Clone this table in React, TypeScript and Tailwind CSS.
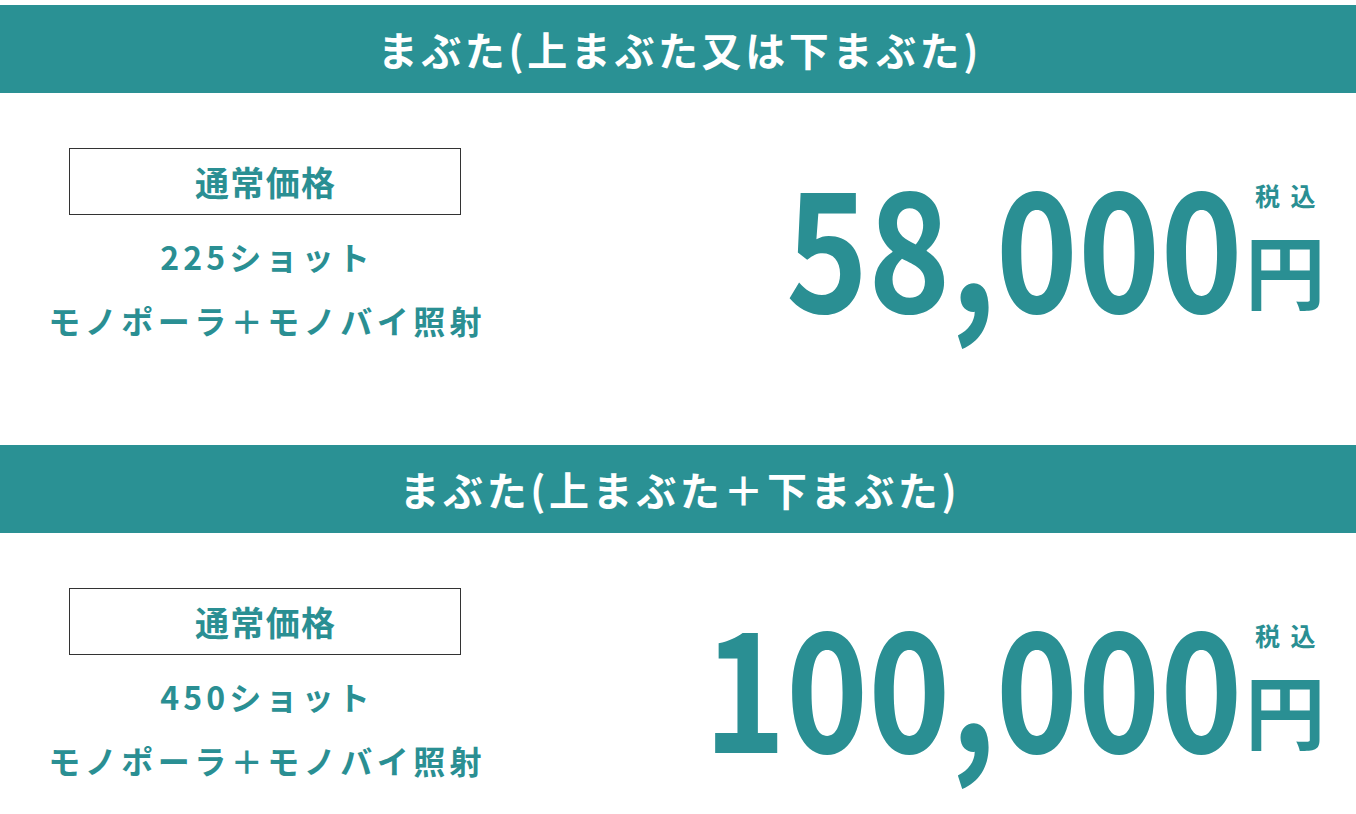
const JP = "font-['Noto_Sans_CJK_JP','Noto_Sans',sans-serif]";

type Plan = {
  title: string;
  shots: string;
  price: string;
};

const PLANS: Plan[] = [
  { title: "まぶた(上まぶた又は下まぶた)", shots: "225ショット", price: "58,000" },
  { title: "まぶた(上まぶた＋下まぶた)", shots: "450ショット", price: "100,000" },
];

function PlanSection({ plan }: { plan: Plan }) {
  return (
    <section>
      <div className="h-[88px] bg-[#2a9194] flex items-center justify-center">
        <h2 className={`${JP} text-white font-bold text-[40px] leading-none tracking-[0.09em] pl-[0.09em]`}>
          {plan.title}
        </h2>
      </div>
      <div className="flex items-start justify-between pr-[30px]">
        {/* left: label + course details */}
        <div className="w-[530px] flex flex-col items-center pt-[55px] text-[#2a8f93] font-bold">
          <div className="w-[392px] h-[67px] border border-[#333] flex items-center justify-center">
            <span className={`${JP} text-[34px] leading-none tracking-[0.04em] pl-[0.04em]`}>通常価格</span>
          </div>
          <p className={`${JP} mt-[25px] text-[32px] leading-none tracking-[0.13em] pl-[0.13em]`}>{plan.shots}</p>
          <p className={`${JP} mt-[32px] text-[32px] leading-none tracking-[0.14em] pl-[0.14em]`}>
            モノポーラ＋モノバイ照射
          </p>
        </div>
        {/* right: price */}
        <div className="flex items-end pt-[82px] text-[#2a8f93] font-bold">
          <span className={`${JP} text-[166px] leading-[0.8] inline-block scale-x-[0.84] origin-right`}>
            {plan.price}
          </span>
          <div className="flex flex-col items-center ml-[2px]">
            <span className={`${JP} text-[25px] leading-none tracking-[0.42em] pl-[0.42em]`}>税込</span>
            <span className={`${JP} text-[80px] leading-none mt-[20px]`}>円</span>
          </div>
        </div>
      </div>
    </section>
  );
}

export default function App() {
  return (
    <div className="w-[1356px] h-[814px] bg-white pt-[5px] overflow-hidden">
      <PlanSection plan={PLANS[0]} />
      <div className="h-[109px]" />
      <PlanSection plan={PLANS[1]} />
    </div>
  );
}
